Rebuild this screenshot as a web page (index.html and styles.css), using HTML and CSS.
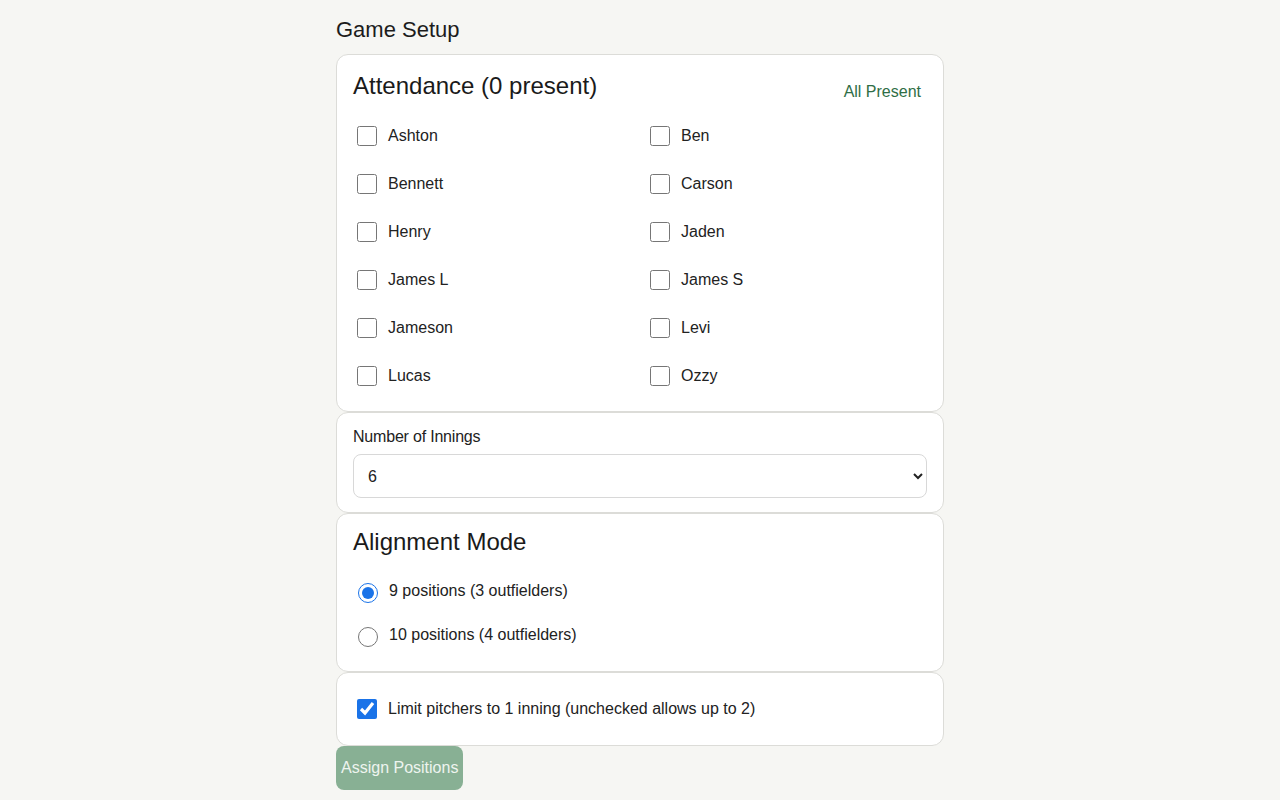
FILE: index.html
```html
<!DOCTYPE html>
<html lang="en">
<head>
<meta charset="utf-8">
<title>Game Setup</title>
<link rel="stylesheet" href="styles.css">
</head>
<body>
<main class="setup">
  <h1 class="page-title">Game Setup</h1>

  <section class="card attendance">
    <div class="card-head">
      <h2 class="card-title">Attendance (0 present)</h2>
      <button class="link-btn" type="button">All Present</button>
    </div>
    <div class="roster">
      <label class="check-row"><input type="checkbox"><span>Ashton</span></label>
      <label class="check-row"><input type="checkbox"><span>Ben</span></label>
      <label class="check-row"><input type="checkbox"><span>Bennett</span></label>
      <label class="check-row"><input type="checkbox"><span>Carson</span></label>
      <label class="check-row"><input type="checkbox"><span>Henry</span></label>
      <label class="check-row"><input type="checkbox"><span>Jaden</span></label>
      <label class="check-row"><input type="checkbox"><span>James L</span></label>
      <label class="check-row"><input type="checkbox"><span>James S</span></label>
      <label class="check-row"><input type="checkbox"><span>Jameson</span></label>
      <label class="check-row"><input type="checkbox"><span>Levi</span></label>
      <label class="check-row"><input type="checkbox"><span>Lucas</span></label>
      <label class="check-row"><input type="checkbox"><span>Ozzy</span></label>
    </div>
  </section>

  <section class="card innings">
    <label class="field-label" for="innings">Number of Innings</label>
    <select id="innings" class="select">
      <option>4</option>
      <option>5</option>
      <option selected>6</option>
      <option>7</option>
    </select>
  </section>

  <section class="card alignment">
    <h2 class="card-title">Alignment Mode</h2>
    <label class="radio-row"><input type="radio" name="mode" checked><span>9 positions (3 outfielders)</span></label>
    <label class="radio-row"><input type="radio" name="mode"><span>10 positions (4 outfielders)</span></label>
  </section>

  <section class="card pitchers">
    <label class="check-row"><input type="checkbox" checked><span>Limit pitchers to 1 inning (unchecked allows up to 2)</span></label>
  </section>

  <button class="primary-btn" type="button" disabled>Assign Positions</button>
</main>
</body>
</html>
```

FILE: styles.css
```css
* {
  box-sizing: border-box;
}

html, body {
  margin: 0;
  background: #f6f6f3;
}

body {
  font-family: "Liberation Sans", Arial, sans-serif;
  color: #1f1f1f;
  font-size: 16px;
}

.setup {
  width: 608px;
  margin: 0 auto;
  padding-top: 16px;
  display: flex;
  flex-direction: column;
}

.page-title {
  margin: 0 0 10px;
  font-size: 22px;
  font-weight: 400;
  line-height: 28px;
  color: #1c1c1c;
}

.card {
  background: #fff;
  border: 1px solid #dcdcd8;
  border-radius: 12px;
  padding: 15px 16px;
}

.card-title {
  margin: 0;
  font-size: 24px;
  font-weight: 400;
  line-height: 30px;
  color: #1a1a1a;
}

.card-head {
  display: flex;
  justify-content: space-between;
  align-items: center;
  margin-bottom: 11px;
}

.link-btn {
  background: none;
  border: 0;
  padding: 0 6px 0 0;
  margin-top: 12px;
  font: inherit;
  color: #2f6e46;
  cursor: pointer;
}

.attendance {
  padding-top: 16px;
  padding-bottom: 11px;
}

.roster {
  display: grid;
  grid-template-columns: 1fr 1fr;
  column-gap: 12px;
}

.check-row,
.radio-row {
  display: flex;
  align-items: center;
  gap: 11px;
  height: 48px;
  line-height: 20px;
  color: #222;
}

.check-row input,
.radio-row input {
  margin: 0 0 0 4px;
  width: 20px;
  height: 20px;
  flex: none;
  accent-color: #1a73e8;
}

.innings {
  padding-bottom: 14px;
}

.field-label {
  display: block;
  line-height: 18px;
  margin-bottom: 8px;
  color: #222;
  letter-spacing: -0.2px;
}

.select {
  display: block;
  width: 100%;
  height: 44px;
  padding: 0 8px 0 10px;
  font: inherit;
  color: #222;
  background: #fff;
  border: 1px solid #d8d8d8;
  border-radius: 8px;
}

.alignment {
  padding-top: 13px;
  padding-bottom: 14px;
}

.alignment .card-title {
  margin-bottom: 12px;
}

.radio-row {
  height: 44px;
  gap: 11px;
}

.radio-row input {
  margin-left: 5px;
  margin-top: 4px;
}

.pitchers {
  padding: 15px 16px 16px;
}

.pitchers .check-row {
  height: 41px;
}

.primary-btn {
  align-self: flex-start;
  height: 44px;
  padding: 0 5px;
  border: 0;
  border-radius: 8px;
  background: #88b094;
  color: #eef4ef;
  font: inherit;
}
```
